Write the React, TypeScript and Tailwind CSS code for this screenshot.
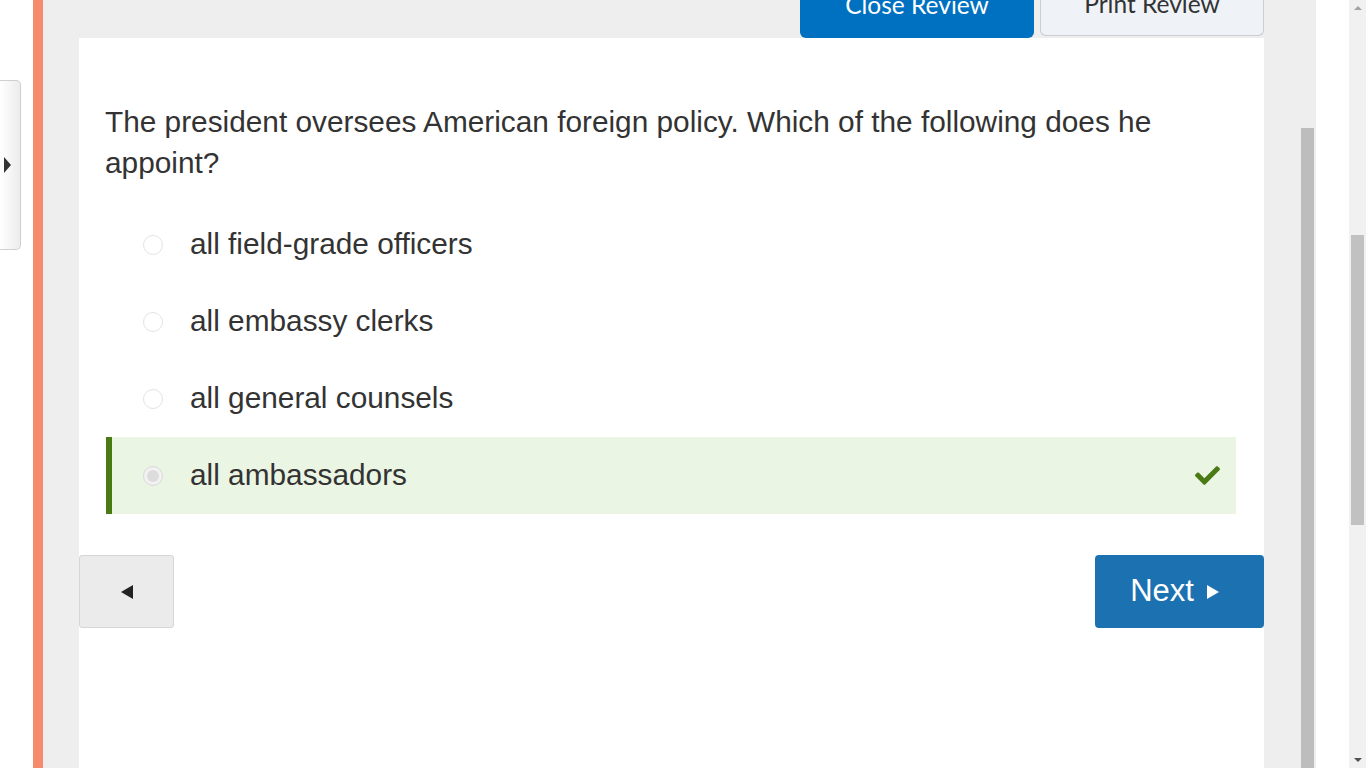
import React from "react";
import { FaCheck } from "react-icons/fa";

const options = [
  { text: "all field-grade officers", correct: false },
  { text: "all embassy clerks", correct: false },
  { text: "all general counsels", correct: false },
  { text: "all ambassadors", correct: true },
];

export default function App() {
  return (
    <div className="flex h-[768px] w-[1366px] overflow-hidden bg-white font-['Liberation_Sans',Arial,sans-serif]">
      {/* left rail with toggle tab */}
      <div className="w-[33px] shrink-0 bg-white">
        <div className="mt-[80px] flex h-[170px] w-[21px] items-center rounded-r-[5px] border border-l-0 border-[#cfcfcf] bg-gradient-to-r from-white to-[#ececec] pl-[4px]">
          <div className="h-0 w-0 border-y-[8px] border-l-[7px] border-y-transparent border-l-[#333]" />
        </div>
      </div>
      {/* orange bar */}
      <div className="w-[10px] shrink-0 bg-[#f58a6c]" />
      {/* main gray area */}
      <div className="flex w-[1257px] shrink-0 flex-col bg-[#eeeeee] px-[36px]">
        {/* top buttons */}
        <div className="flex h-[38px] shrink-0 justify-end gap-[6px] font-['Lato','Open_Sans',sans-serif]">
          <div className="flex h-[38px] w-[234px] items-center justify-center rounded-b-[6px] bg-[#0070c0] pb-[28px] text-[24.5px] text-white">
            Close Review
          </div>
          <div className="flex h-[36px] w-[224px] items-center justify-center rounded-b-[6px] border border-t-0 border-[#c9ccd1] bg-[#eff2f7] pb-[26px] text-[24.5px] text-[#333]">
            Print Review
          </div>
        </div>
        {/* card */}
        <div className="flex-1 bg-white">
          <div className="pl-[26px] pr-[27px] pt-[63px]">
            <p className="text-[29.8px] leading-[41px] text-[#333]">
              The president oversees American foreign policy. Which of the following does he appoint?
            </p>
          </div>
          <div className="mt-[23px] flex flex-col pl-[27px] pr-[28px]">
            {options.map((o) => (
              <div
                key={o.text}
                className={
                  o.correct
                    ? "flex h-[77px] items-center border-l-[6px] border-[#4a7a13] bg-[#eaf5e3] pr-[16px]"
                    : "flex h-[77px] items-center border-l-[6px] border-transparent pr-[16px]"
                }
              >
                <div
                  className={
                    o.correct
                      ? "ml-[31px] flex h-[20px] w-[20px] items-center justify-center rounded-full border border-[#d9d9d9] bg-[#f2f2f2]"
                      : "ml-[31px] h-[20px] w-[20px] rounded-full border border-[#e3e3e3] bg-white"
                  }
                >
                  {o.correct && <div className="h-[12px] w-[12px] rounded-full bg-[#dcdcdc]" />}
                </div>
                <span className="ml-[27px] flex-1 text-[29.8px] text-[#333]">{o.text}</span>
                {o.correct && <FaCheck className="h-[25px] w-[25px] text-[#4a7a13]" />}
              </div>
            ))}
          </div>
          <div className="mt-[41px] flex justify-between">
            <div className="flex h-[73px] w-[95px] items-center justify-center rounded-[3px] border border-[#d6d6d6] bg-[#ebebeb]">
              <div className="h-0 w-0 border-y-[7px] border-r-[12px] border-y-transparent border-r-[#222]" />
            </div>
            <div className="flex h-[73px] w-[169px] items-center justify-center gap-[13px] rounded-[4px] bg-[#1c72b1] pr-[10px] text-[31px] text-white">
              <span>Next</span>
              <div className="h-0 w-0 border-y-[7px] border-l-[12px] border-y-transparent border-l-white" />
            </div>
          </div>
        </div>
      </div>
      {/* inner scrollbar */}
      <div className="flex w-[16px] shrink-0 flex-col bg-[#eeeeee] pl-[1px] pr-[2px] pt-[128px]">
        <div className="flex-1 bg-[#bdbdbd]" />
      </div>
      {/* white gap */}
      <div className="w-[33px] shrink-0 bg-white" />
      {/* page scrollbar */}
      <div className="flex w-[17px] shrink-0 flex-col items-center bg-[#f1f1f1]">
        <div className="mt-[6px] h-0 w-0 border-x-[4px] border-b-[4px] border-x-transparent border-b-[#a3a3a3]" />
        <div className="mt-[225px] h-[290px] w-[13px] bg-[#c1c1c1]" />
        <div className="flex-1" />
        <div className="mb-[6px] h-0 w-0 border-x-[4px] border-t-[4px] border-x-transparent border-t-[#505050]" />
      </div>
    </div>
  );
}
